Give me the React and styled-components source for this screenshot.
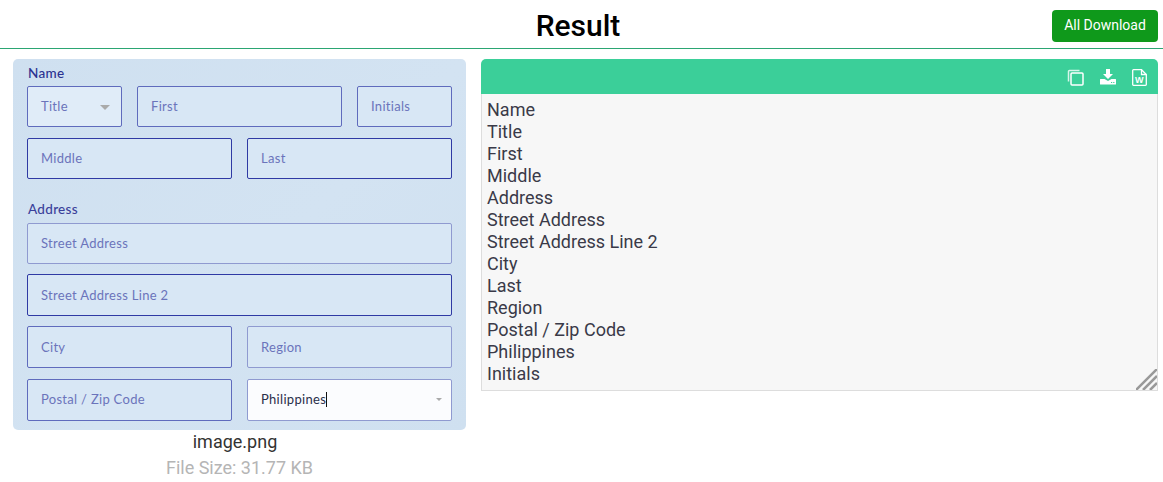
import React from 'react'
import styled, { createGlobalStyle } from 'styled-components'

const lines = [
  'Name',
  'Title',
  'First',
  'Middle',
  'Address',
  'Street Address',
  'Street Address Line 2',
  'City',
  'Last',
  'Region',
  'Postal / Zip Code',
  'Philippines',
  'Initials',
]

function CopyIcon() {
  return (
    <svg width="17" height="17" viewBox="0 0 17 17" fill="none" stroke="#fff" strokeWidth="1.5">
      <path d="M1.500 12.500V2.500A1 1 0 0 1 2.500 1.500h10" opacity="0.8" />
      <rect x="4" y="4" width="12" height="12" rx="1" />
    </svg>
  )
}

function DownloadIcon() {
  return (
    <svg width="16" height="16" viewBox="0 0 16 16" fill="#fff">
      <path d="M6 0h4v5h3l-5 5-5-5h3z" />
      <path d="M0.500 10h4l3.500 2 3.500-2h4a.5.5 0 0 1 .5.5V15a.5.5 0 0 1-.5.5H.5A.5.5 0 0 1 0 15v-4.500a.5.5 0 0 1 .5-.5z" />
      <path d="M11 13h1.200v1H11zM13.200 13h1.200v1h-1.200z" fill="#3bcf99" />
    </svg>
  )
}

function WordIcon() {
  return (
    <svg width="15" height="17" viewBox="0 0 15 17" fill="none" stroke="#fff" strokeWidth="1.300">
      <path d="M1.500.7h8l4.800 4.800v10a.8.8 0 0 1-.8.8h-12a.8.8 0 0 1-.8-.8V1.500a.8.8 0 0 1 .8-.8z" />
      <path d="M9.500.7v4.800h4.800" />
      <WordLetter x="7.300" y="14" textAnchor="middle">W</WordLetter>
    </svg>
  )
}

function App() {
  return (
    <>
      <GlobalStyle />
      <Header>
        <Title>Result</Title>
        <AllDownload>All Download</AllDownload>
      </Header>
      <Main>
        <ImageColumn>
          <FormShot>
            <GroupLabel>Name</GroupLabel>
            <Row $columns="95px 1fr 95px">
              <Field $tint="#e0ecf8">
                Title
                <Caret />
              </Field>
              <Field>First</Field>
              <Field>Initials</Field>
            </Row>
            <Row $columns="1fr 1fr">
              <Field $dark>Middle</Field>
              <Field $dark>Last</Field>
            </Row>
            <GroupLabel $second>Address</GroupLabel>
            <Row $tight>
              <Field $soft>Street Address</Field>
            </Row>
            <Row $tight>
              <Field $dark $tall $low>Street Address Line 2</Field>
            </Row>
            <Row $columns="1fr 1fr">
              <Field $tall $low>City</Field>
              <Field $tall $low $soft>Region</Field>
            </Row>
            <Row $columns="1fr 1fr">
              <Field $tall>Postal / Zip Code</Field>
              <Field $tall $soft $filled>
                <span>Philippines</span>
                <TextCursor />
                <Caret $small />
              </Field>
            </Row>
          </FormShot>
          <FileName>image.png</FileName>
          <FileSize>File Size: 31.77 KB</FileSize>
        </ImageColumn>
        <ResultPanel>
          <PanelBar>
            <IconButton><CopyIcon /></IconButton>
            <IconButton><DownloadIcon /></IconButton>
            <IconButton><WordIcon /></IconButton>
          </PanelBar>
          <PanelBody>
            {lines.map((line) => (
              <div key={line}>{line}</div>
            ))}
            <Grip width="21" height="21" viewBox="0 0 21 21" stroke="#999" strokeWidth="2.500">
              <path d="M0 21L21 0M7 21L21 7M14 21L21 14" />
            </Grip>
          </PanelBody>
        </ResultPanel>
      </Main>
    </>
  )
}

export default App

const GlobalStyle = createGlobalStyle`
  body {
    margin: 0;
    background: #fff;
    font-family: Roboto, "Liberation Sans", sans-serif;
  }
`

const Header = styled.header`
  position: relative;
  height: 48px;
  border-bottom: 1px solid #2ba673;
  display: flex;
  align-items: center;
  justify-content: flex-end;
  padding-right: 5px;
`

const Title = styled.h1`
  position: absolute;
  left: 0;
  right: 7px;
  top: 7px;
  margin: 0;
  text-align: center;
  font-size: 30px;
  line-height: 38px;
  font-weight: 500;
  color: #000;
`

const AllDownload = styled.button`
  width: 106px;
  height: 32px;
  margin-top: 3px;
  padding: 0 0 2px;
  border: 0;
  border-radius: 4px;
  background: #0f991b;
  color: #fff;
  font-family: inherit;
  font-size: 14px;
`

const Main = styled.main`
  display: flex;
  align-items: flex-start;
  gap: 15px;
  padding: 10px 5px 0 13px;
`

const ImageColumn = styled.section`
  width: 453px;
  flex: none;
  text-align: center;
`

const FormShot = styled.div`
  height: 371px;
  box-sizing: border-box;
  padding: 0 14px;
  border-radius: 5px;
  background: linear-gradient(135deg, #cfe0f0, #d3e3f2 55%, #cfe0f0);
  font-family: Lato, "Open Sans", sans-serif;
  letter-spacing: 0.3px;
  text-align: left;
`

const GroupLabel = styled.div`
  box-sizing: border-box;
  height: ${(p) => (p.$second ? '33px' : '27px')};
  padding: ${(p) => (p.$second ? '11px' : '6px')} 0 0 1px;
  font-size: 13.500px;
  font-weight: 500;
  line-height: 16px;
  color: ${(p) => (p.$second ? '#3a409a' : '#2b3190')};
`

const Row = styled.div`
  display: grid;
  grid-template-columns: ${(p) => p.$columns || '1fr'};
  column-gap: 15px;
  margin-bottom: ${(p) => (p.$tight ? '10px' : '11px')};
`

const fieldBorder = (p) => {
  if (p.$dark) return '#2f3aa4'
  if (p.$soft) return '#8f9ad0'
  return '#5f6bbd'
}

const Field = styled.div`
  height: ${(p) => (p.$tall ? '42px' : '41px')};
  box-sizing: border-box;
  padding: 0 12px ${(p) => (p.$low ? '0' : '2px')} 13px;
  display: flex;
  align-items: center;
  position: relative;
  border: 1px solid ${fieldBorder};
  border-radius: 2px;
  background: ${(p) => (p.$filled ? '#fbfcfe' : p.$tint || '#d8e7f5')};
  font-size: 13px;
  color: ${(p) => (p.$filled ? '#2a2f4a' : '#6b74bb')};
`

const Caret = styled.i`
  position: absolute;
  right: ${(p) => (p.$small ? '9px' : '11px')};
  top: 50%;
  margin-top: -2px;
  border-style: solid;
  border-width: ${(p) => (p.$small ? '3px 3px 0' : '5px 5px 0')};
  border-color: #aaa transparent transparent;
`

const TextCursor = styled.i`
  width: 1px;
  height: 15px;
  background: #111;
`

const FileName = styled.div`
  padding-right: 9px;
  font-size: 18px;
  line-height: 24px;
  color: #333;
`

const FileSize = styled.div`
  font-size: 18px;
  line-height: 28px;
  color: #b5b5b5;
`

const ResultPanel = styled.section`
  flex: 1;
  border-radius: 5px 5px 0 0;
  overflow: hidden;
`

const PanelBar = styled.div`
  height: 35px;
  box-sizing: border-box;
  padding: 1px 10px 0 0;
  display: flex;
  align-items: center;
  justify-content: flex-end;
  gap: 15px;
  background: #3bcf99;
`

const IconButton = styled.span`
  display: flex;
  width: 17px;
  justify-content: center;
`

const WordLetter = styled.text`
  fill: #fff;
  stroke: none;
  font-family: "Liberation Sans", sans-serif;
  font-size: 9px;
  font-weight: 700;
`

const PanelBody = styled.div`
  position: relative;
  height: 297px;
  box-sizing: border-box;
  padding: 5px 5px;
  border: 1px solid #ddd;
  border-top: 0;
  background: #f7f7f7;
  font-size: 18px;
  line-height: 22px;
  color: #3a3a48;
`

const Grip = styled.svg`
  position: absolute;
  right: 0;
  bottom: 0;
`
